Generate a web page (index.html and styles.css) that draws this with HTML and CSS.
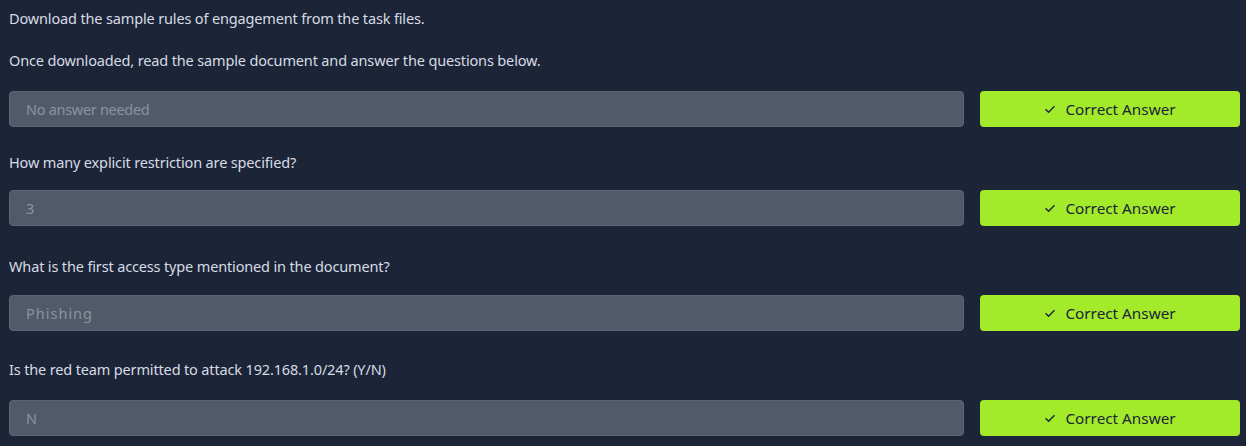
FILE: index.html
```html
<!DOCTYPE html>
<html>
<head>
<meta charset="utf-8">
<link rel="stylesheet" href="styles.css">
</head>
<body>
<div class="page">
  <p class="text first">Download the sample rules of engagement from the task files.</p>
  <p class="text intro">Once downloaded, read the sample document and answer the questions below.</p>
  <div class="row r1">
    <div class="answer">No answer needed</div>
    <button class="btn"><svg class="check" viewBox="0 0 12 12" width="12" height="12"><path d="M1.5 6.3 L4.6 9.2 L10.5 3.3" fill="none" stroke="currentColor" stroke-width="1.4"/></svg>Correct Answer</button>
  </div>
  <p class="text q qa">How many explicit restriction are specified?</p>
  <div class="row r2">
    <div class="answer">3</div>
    <button class="btn"><svg class="check" viewBox="0 0 12 12" width="12" height="12"><path d="M1.5 6.3 L4.6 9.2 L10.5 3.3" fill="none" stroke="currentColor" stroke-width="1.4"/></svg>Correct Answer</button>
  </div>
  <p class="text q qb">What is the first access type mentioned in the document?</p>
  <div class="row r3">
    <div class="answer spaced">Phishing</div>
    <button class="btn"><svg class="check" viewBox="0 0 12 12" width="12" height="12"><path d="M1.5 6.3 L4.6 9.2 L10.5 3.3" fill="none" stroke="currentColor" stroke-width="1.4"/></svg>Correct Answer</button>
  </div>
  <p class="text q qc">Is the red team permitted to attack 192.168.1.0/24? (Y/N)</p>
  <div class="row r4">
    <div class="answer">N</div>
    <button class="btn"><svg class="check" viewBox="0 0 12 12" width="12" height="12"><path d="M1.5 6.3 L4.6 9.2 L10.5 3.3" fill="none" stroke="currentColor" stroke-width="1.4"/></svg>Correct Answer</button>
  </div>
</div>
</body>
</html>
```
FILE: styles.css
```css
html, body {
  margin: 0;
  padding: 0;
  background: #1c2538;
}
.page {
  padding: 0 6px 0 9px;
  display: flex;
  flex-direction: column;
  font-family: "Noto Sans", sans-serif;
  color: #d6dbe4;
}
.text {
  margin: 0;
  font-size: 14.5px;
  line-height: 20px;
  letter-spacing: -0.15px;
}
.first { margin-top: 8px; }
.intro { margin-top: 22px; }
.row {
  display: flex;
  gap: 16px;
  height: 36px;
}
.r1 { margin-top: 21px; }
.r2 { margin-top: 18px; }
.r3 { margin-top: 19px; }
.r4 { margin-top: 21px; }
.qa { margin-top: 25px; }
.qb { margin-top: 30px; }
.qc { margin-top: 28px; }
.answer {
  flex: 1;
  box-sizing: border-box;
  background: #525a6a;
  border: 1px solid #5c6475;
  border-radius: 4px;
  color: #8a92a1;
  font-size: 14.5px;
  letter-spacing: -0.3px;
  padding: 0 16px;
  display: flex;
  align-items: center;
}
.spaced { letter-spacing: 1px; }
.btn {
  width: 260px;
  box-sizing: border-box;
  border: none;
  border-radius: 4px;
  background: #a3ea2a;
  color: #1c2538;
  font-family: "Noto Sans", sans-serif;
  font-size: 15.3px;
  display: flex;
  align-items: center;
  justify-content: center;
  gap: 9px;
  padding: 0;
}
.check { display: block; }
```
